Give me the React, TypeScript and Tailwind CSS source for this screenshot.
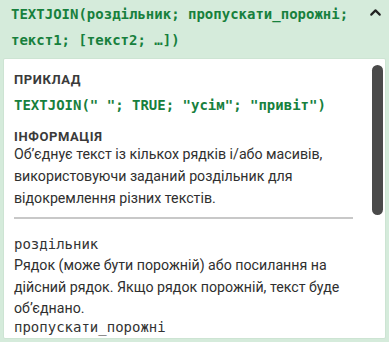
import { ChevronUp } from 'lucide-react';

const mono = { fontFamily: '"DejaVu Sans Mono", monospace' };

const App = () => {
  return (
    <div className="w-[389px] h-[342px] bg-[#d5ebdb] flex flex-col overflow-hidden font-['Roboto',sans-serif]">
      {/* Formula signature */}
      <div className="relative pl-[11px] pr-8 pt-[1px] h-[58px]">
        <div
          className="text-[14px] leading-[26px] font-bold text-[#17803d]"
          style={mono}
        >
          TEXTJOIN(роздільник; пропускати_порожні; текст1; [текст2; …])
        </div>
        <ChevronUp className="absolute right-[5px] top-[4px] text-[#222]" size={17} strokeWidth={3} />
      </div>

      {/* Help body */}
      <div className="relative mx-[3px] mb-[3px] flex-1 bg-white border border-[#cde4d3] rounded-[2px] overflow-hidden pl-[10px] pr-[30px] pt-[11px]">
        <div className="text-[13px] leading-[20px] font-bold tracking-[0.6px] text-[#3a3a3a]">ПРИКЛАД</div>
        <div className="mt-[3px] text-[14px] leading-[24px] font-bold text-[#17803d]" style={mono}>
          TEXTJOIN(" "; TRUE; "усім"; "привіт")
        </div>

        <div className="mt-[14px] text-[13px] leading-[12px] font-bold tracking-[0.6px] text-[#3a3a3a]">ІНФОРМАЦІЯ</div>
        <p className="text-[14.2px] leading-[22px] text-[#2f2f2f] w-[345px]">
          Об’єднує текст із кількох рядків і/або масивів, використовуючи заданий роздільник для відокремлення різних текстів.
        </p>

        <div className="mt-[8px] mr-[2px] h-[2px] bg-[#c8c8c8]" />

        <div className="mt-[15px] text-[14px] leading-[20px] text-[#333]" style={mono}>
          роздільник
        </div>
        <p className="mt-[1px] text-[14.2px] leading-[21.5px] text-[#2f2f2f] w-[345px]">
          Рядок (може бути порожній) або посилання на дійсний рядок. Якщо рядок порожній, текст буде об’єднано.
        </p>
        <div className="mt-[-1px] text-[14px] leading-[16px] text-[#333]" style={mono}>
          пропускати_порожні
        </div>

        {/* scrollbar thumb */}
        <div className="absolute right-[2px] top-[6px] w-[11px] h-[150px] rounded-full bg-[#4a4a4a]" />
      </div>
    </div>
  );
};

export default App;
